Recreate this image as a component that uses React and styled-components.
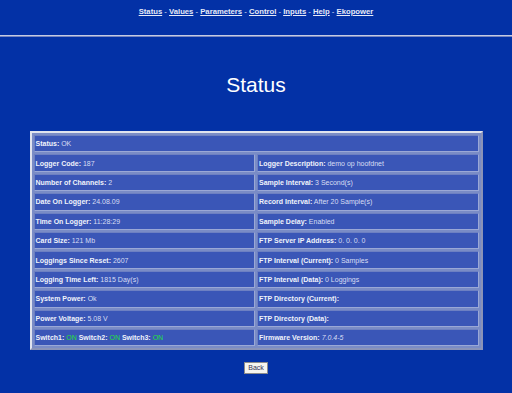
import React from 'react';
import styled, { createGlobalStyle } from 'styled-components';

const GlobalStyle = createGlobalStyle`
    html, body {
        margin: 0;
        padding: 0;
        background: #0331a6;
        font-family: "Liberation Sans", Arial, sans-serif;
    }
`

const rows = [
    [{ label: 'Logger Code', value: '187' }, { label: 'Logger Description', value: 'demo op hoofdnet' }],
    [{ label: 'Number of Channels', value: '2' }, { label: 'Sample Interval', value: '3 Second(s)' }],
    [{ label: 'Date On Logger', value: '24.08.09' }, { label: 'Record Interval', value: 'After 20 Sample(s)' }],
    [{ label: 'Time On Logger', value: '11:28:29' }, { label: 'Sample Delay', value: 'Enabled' }],
    [{ label: 'Card Size', value: '121 Mb' }, { label: 'FTP Server IP Address', value: '0. 0. 0. 0' }],
    [{ label: 'Loggings Since Reset', value: '2607' }, { label: 'FTP Interval (Current)', value: '0 Samples' }],
    [{ label: 'Logging Time Left', value: '1815 Day(s)' }, { label: 'FTP Interval (Data)', value: '0 Loggings' }],
    [{ label: 'System Power', value: 'Ok' }, { label: 'FTP Directory (Current)', value: '' }],
    [{ label: 'Power Voltage', value: '5.08 V' }, { label: 'FTP Directory (Data)', value: '' }],
]

const links = ['Status', 'Values', 'Parameters', 'Control', 'Inputs', 'Help', 'Ekopower']

const App = () => {
    return (
        <Page>
            <GlobalStyle />
            <Nav>
                {links.map((l, i) => (
                    <React.Fragment key={l}>
                        {i > 0 && <Sep> - </Sep>}
                        <NavLink href="#">{l}</NavLink>
                    </React.Fragment>
                ))}
            </Nav>
            <Rule />
            <Title>Status</Title>
            <Table>
                <tbody>
                    <tr>
                        <Cell colSpan={2}><Label>Status:</Label> OK</Cell>
                    </tr>
                    {rows.map((row, i) => (
                        <tr key={i}>
                            {row.map(c => (
                                <Cell key={c.label}>
                                    <Label>{c.label}:</Label>{c.value && ' ' + c.value}
                                </Cell>
                            ))}
                        </tr>
                    ))}
                    <tr>
                        <Cell>
                            <Label>Switch1:</Label> <On>ON</On> <Label>Switch2:</Label> <On>ON</On> <Label>Switch3:</Label> <On>ON</On>
                        </Cell>
                        <Cell>
                            <Label>Firmware Version:</Label> <em>7.0.4-5</em>
                        </Cell>
                    </tr>
                </tbody>
            </Table>
            <ButtonRow>
                <BackButton>Back</BackButton>
            </ButtonRow>
        </Page>
    )
}

const Page = styled.div`
    min-height: 393px;
    background: #0331a6;
    color: #dfe5f7;
`

const Nav = styled.div`
    padding-top: 7px;
    text-align: center;
    font-size: 7.7px;
    line-height: 10px;
    color: #dfe5f7;
`

const NavLink = styled.a`
    color: #e6eaf8;
    font-weight: bold;
    text-decoration: underline;
`

const Sep = styled.span`
    white-space: pre;
`

const Rule = styled.hr`
    margin: 18px 0 0;
    height: 0;
    border: none;
    border-top: 1px solid #c5cbe2;
    border-bottom: 1px solid #7585c2;
`

const Title = styled.h1`
    margin: 36px 0 34px;
    text-align: center;
    font-weight: normal;
    font-size: 21px;
    line-height: 24px;
    color: #ffffff;
`

const Table = styled.table`
    width: 453px;
    margin: 0 auto;
    border-collapse: separate;
    border-spacing: 2px;
    background: #7a8cc6;
    border: 2px solid;
    border-color: #e0e3ee #8a93b8 #8a93b8 #e0e3ee;
`

const Cell = styled.td`
    width: 50%;
    height: 15.4px;
    padding: 0 1px;
    background: #3a56b7;
    border: 1px solid;
    border-color: #6d80c2 #9aa8d6 #9aa8d6 #6d80c2;
    font-size: 7px;
    color: #d8def4;
    white-space: nowrap;

    em {
        font-style: italic;
    }
`

const Label = styled.b`
    color: #f0f3fb;
`

const On = styled.span`
    color: #22e03a;
`

const ButtonRow = styled.div`
    display: flex;
    justify-content: center;
    margin-top: 12px;
`

const BackButton = styled.button`
    font-family: "Liberation Sans", Arial, sans-serif;
    font-size: 7px;
    line-height: 8px;
    padding: 1px 3px;
    background: #f6f5ef;
    color: #333355;
    border: 1px solid #8c8c8c;
    border-radius: 0;
`

export default App
